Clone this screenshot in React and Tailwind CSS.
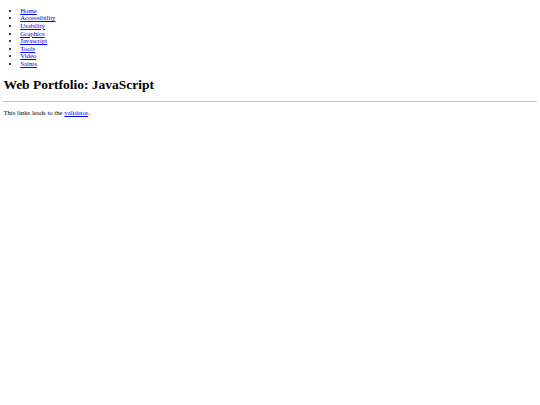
const links = ['Home', 'Accessibility', 'Usability', 'Graphics', 'Javascript', 'Tools', 'Video', 'Saints'];

export default function App() {
  return (
    <div className="min-h-screen bg-white px-[3.375px] pt-[6.75px] font-['Liberation_Serif','Times_New_Roman',serif] text-[6.75px] text-black">
      <ul className="list-disc pl-[16.875px] leading-[7.594px]">
        {links.map((l) => (
          <li key={l}>
            <a href="#" className="text-[#0000ee] underline">
              {l}
            </a>
          </li>
        ))}
      </ul>

      <h1 className="my-[9.045px] text-[13.5px] font-bold leading-[15.61px]">Web Portfolio: JavaScript</h1>

      <hr className="h-0 border-t border-[#c4c4c4]" />

      <p className="mt-[6.75px] leading-[7.594px]">
        This links leads to the{' '}
        <a href="#" className="text-[#0000ee] underline">
          validator
        </a>
        .
      </p>
    </div>
  );
}
